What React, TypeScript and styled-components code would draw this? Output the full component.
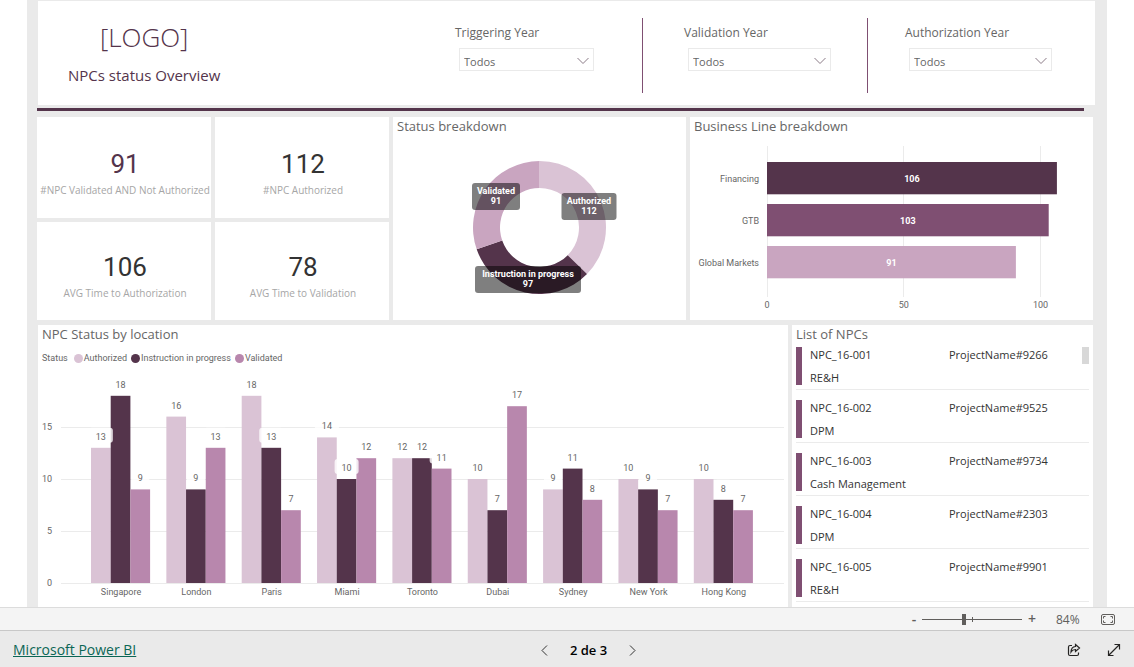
import React, { useState } from "react";
import styled, { createGlobalStyle } from "styled-components";

const color = {
  light: "#dac3d5",
  mid: "#b887ad",
  soft: "#c9a5c0",
  plum: "#7f4f72",
  dark: "#54344b",
  canvas: "#eaeaea",
  grid: "#ebebeb",
  text: "#666666",
};

const textFont = '"Open Sans", "Noto Sans", sans-serif';
const numberFont = 'Roboto, "Open Sans", sans-serif';

const GlobalStyle = createGlobalStyle`
  *, *::before, *::after { box-sizing: border-box; }
  body {
    margin: 0;
    background: #fff;
    color: ${color.text};
    font-family: ${textFont};
    font-size: 12px;
  }
  button, select { font-family: inherit; }
`;

const Page = styled.div`
  display: flex;
  flex-direction: column;
  min-height: 100vh;
`;

const Canvas = styled.main`
  display: flex;
  flex-direction: column;
  flex: 1;
  margin: 0 27px;
  padding: 1px 12px 0 10px;
  background: ${color.canvas};
`;

const Header = styled.header`
  display: flex;
  justify-content: space-between;
  align-items: flex-start;
  height: 104px;
  padding: 17px 2px 0 30px;
  margin: 0 0 0 1px;
  background: #fff;
`;

const Brand = styled.div`
  display: flex;
  flex-direction: column;
  align-items: center;
  padding-top: 1px;
  color: ${color.dark};
`;

const Logo = styled.div`
  font-size: 26px;
  font-weight: 300;
  line-height: 36px;
`;

const ReportTitle = styled.h1`
  margin: 0;
  font-size: 15px;
  font-weight: 400;
  line-height: 40px;
`;

const Filters = styled.div`
  display: grid;
  grid-template-columns: 230px 225px 226px;
`;

const FilterCell = styled.div<{ $inset: number }>`
  display: flex;
  flex-direction: column;
  gap: 5px;
  height: 75px;
  padding: 5px 0 0 ${(p) => p.$inset}px;
  border-left: 1px solid ${color.plum};

  &:first-child {
    border-left-color: transparent;
  }
`;

const FilterLabel = styled.label`
  font-size: 12px;
  line-height: 20px;
`;

const SelectBox = styled.div<{ $width: number }>`
  position: relative;
  width: ${(p) => p.$width}px;
  margin-left: 4px;

  svg {
    position: absolute;
    top: 9px;
    right: 5px;
    pointer-events: none;
  }
`;

const Select = styled.select`
  appearance: none;
  display: block;
  width: 100%;
  height: 23px;
  padding: 3px 4px 0;
  border: 1px solid #eaeaea;
  border-radius: 0;
  background: #fff;
  color: ${color.text};
  font-size: 11px;
`;

const Rule = styled.hr`
  height: 3px;
  margin: 3px 11px 6px 0;
  border: 0;
  background: ${color.dark};
`;

const Overview = styled.section`
  display: grid;
  grid-template-columns: 174fr 174fr 293fr 403fr;
  grid-template-rows: 101px 98px;
  gap: 4px;
  margin: 0 2px 5px 0;
`;

const Details = styled.section`
  display: grid;
  grid-template-columns: 750fr 301fr;
  gap: 4px;
  flex: 1;
  margin: 0 2px 0 1px;
`;

const Card = styled.article<{ $tall?: boolean }>`
  display: flex;
  flex-direction: column;
  min-width: 0;
  grid-row: ${(p) => (p.$tall ? "span 2" : "auto")};
  background: #fff;
`;

const CardTitle = styled.h2`
  margin: 0;
  padding: 0 4px 2px;
  font-size: 13px;
  font-weight: 400;
  line-height: 18px;
`;

const Kpi = styled(Card)`
  align-items: center;
  justify-content: center;
  padding: 12px 0 0 2px;
`;

const KpiValue = styled.div<{ $accent?: boolean }>`
  color: ${(p) => (p.$accent ? color.dark : "#333")};
  font-family: ${numberFont};
  font-size: 26px;
  line-height: 32px;
`;

const KpiLabel = styled.div`
  color: #a6a6a6;
  font-size: 10px;
  line-height: 20px;
  white-space: nowrap;
`;

const Chart = styled.svg<{ $height: number }>`
  display: block;
  width: 100%;
  height: ${(p) => p.$height}px;
  font-family: ${numberFont};
  font-size: 9px;
  fill: ${color.text};
`;

const DataLabel = styled.text`
  font-weight: 700;
  fill: #fff;
`;

const Legend = styled.div`
  display: flex;
  align-items: center;
  gap: 4px;
  height: 28px;
  padding: 0 4px 2px;
  font-family: ${numberFont};
  font-size: 9px;
`;

const LegendTitle = styled.span`
  margin-right: 2px;
`;

const LegendItem = styled.span<{ $color: string }>`
  display: flex;
  align-items: center;
  gap: 1px;

  &::before {
    content: "";
    width: 9px;
    height: 9px;
    border-radius: 50%;
    background: ${(p) => p.$color};
  }
`;

const ListBody = styled.div`
  position: relative;
  padding: 2px 4px 0 4px;
`;

const ProjectList = styled.ul`
  margin: 0;
  padding: 0;
  list-style: none;
`;

const ProjectRow = styled.li`
  display: grid;
  grid-template-columns: 139fr 154fr;
  height: 43px;
  margin-bottom: 10px;
  border-bottom: 1px solid ${color.grid};
  color: #333;
  font-size: 11px;
  line-height: 16px;

  &:last-child {
    margin-bottom: 0;
  }
`;

const ProjectName = styled.span`
  padding-left: 14px;
`;

const ProjectMain = styled.div`
  display: flex;
  flex-direction: column;
  gap: 7px;
  height: 38px;
  padding-left: 8px;
  border-left: 6px solid ${color.plum};
  white-space: nowrap;
`;

const ScrollThumb = styled.div`
  position: absolute;
  top: 2px;
  right: 4px;
  width: 7px;
  height: 17px;
  background: #d8d8d8;
`;

const ZoomBar = styled.div`
  display: flex;
  align-items: center;
  justify-content: flex-end;
  height: 23px;
  padding: 0 18px 0 0;
  border-top: 1px solid #dcdcdc;
  background: #f4f4f4;
`;

const ZoomButton = styled.button`
  width: 12px;
  padding: 0;
  border: 0;
  background: none;
  color: #605e5c;
  font-size: 14px;
  font-weight: 600;
  line-height: 20px;
  text-align: center;
`;

const ZoomSlider = styled.input`
  appearance: none;
  width: 100px;
  height: 12px;
  margin: 0 4px 0 2px;
  background:
    linear-gradient(#605e5c, #605e5c) 50px 50% / 1px 5px no-repeat,
    linear-gradient(#605e5c, #605e5c) 0 50% / 100% 1px no-repeat;

  &::-webkit-slider-thumb {
    appearance: none;
    width: 4px;
    height: 11px;
    border: 0;
    border-radius: 0;
    background: #605e5c;
  }
`;

const ZoomValue = styled.output`
  width: 26px;
  margin: 0 18px;
  color: #605e5c;
  font-size: 12px;
`;

const IconButton = styled.button`
  display: flex;
  align-items: center;
  justify-content: center;
  width: 16px;
  height: 16px;
  padding: 0;
  border: 0;
  background: none;
  color: #252423;
`;

const NavBar = styled.footer`
  display: grid;
  grid-template-columns: 1fr auto 1fr;
  align-items: center;
  height: 37px;
  padding: 2px 12px 0 13px;
  border-top: 1px solid #c8c8c8;
  background: ${color.canvas};
`;

const BrandLink = styled.a`
  justify-self: start;
  color: #0a6655;
  font-size: 14px;
  line-height: 20px;
`;

const Pager = styled.nav`
  display: flex;
  align-items: center;
  gap: 17px;
  margin-left: 42px;
  color: #000;
  font-size: 13px;
  font-weight: 600;
`;

const Actions = styled.div`
  display: flex;
  justify-self: end;
  gap: 24px;
`;

const filters = [
  { id: "triggering", label: "Triggering Year", width: 135, inset: 42 },
  { id: "validation", label: "Validation Year", width: 143, inset: 41 },
  { id: "authorization", label: "Authorization Year", width: 143, inset: 37 },
];

const kpis = [
  { value: 91, label: "#NPC Validated AND Not Authorized", accent: true },
  { value: 112, label: "#NPC Authorized" },
];

const averages = [
  { value: 106, label: "AVG Time to Authorization" },
  { value: 78, label: "AVG Time to Validation" },
];

const businessLines = [
  { name: "Financing", value: 106, fill: color.dark },
  { name: "GTB", value: 103, fill: color.plum },
  { name: "Global Markets", value: 91, fill: color.soft },
];

const statuses = [
  { name: "Authorized", fill: color.light },
  { name: "Instruction in progress", fill: color.dark },
  { name: "Validated", fill: color.mid },
];

const locations: { name: string; values: number[] }[] = [
  { name: "Singapore", values: [13, 18, 9] },
  { name: "London", values: [16, 9, 13] },
  { name: "Paris", values: [18, 13, 7] },
  { name: "Miami", values: [14, 10, 12] },
  { name: "Toronto", values: [12, 12, 11] },
  { name: "Dubai", values: [10, 7, 17] },
  { name: "Sydney", values: [9, 11, 8] },
  { name: "New York", values: [10, 9, 7] },
  { name: "Hong Kong", values: [10, 8, 7] },
];

const projects = [
  { id: "NPC_16-001", project: "ProjectName#9266", line: "RE&H" },
  { id: "NPC_16-002", project: "ProjectName#9525", line: "DPM" },
  { id: "NPC_16-003", project: "ProjectName#9734", line: "Cash Management" },
  { id: "NPC_16-004", project: "ProjectName#2303", line: "DPM" },
  { id: "NPC_16-005", project: "ProjectName#9901", line: "RE&H" },
];

function ringSlice(from: number, to: number, cx: number, cy: number, outer: number, inner: number) {
  const point = (share: number, radius: number) => {
    const angle = share * 2 * Math.PI;
    return `${cx + radius * Math.sin(angle)} ${cy - radius * Math.cos(angle)}`;
  };
  const large = to - from > 0.5 ? 1 : 0;
  return (
    `M${point(from, outer)}A${outer} ${outer} 0 ${large} 1 ${point(to, outer)}` +
    `L${point(to, inner)}A${inner} ${inner} 0 ${large} 0 ${point(from, inner)}Z`
  );
}

const slices = [
  { name: "Authorized", value: 112, fill: color.light, x: 196, y: 69, width: 55 },
  { name: "Instruction in progress", value: 97, fill: color.dark, x: 135, y: 142, width: 106 },
  { name: "Validated", value: 91, fill: color.soft, x: 103, y: 59, width: 48 },
];

function StatusDonut() {
  const total = slices.reduce((sum, s) => sum + s.value, 0);
  let start = 0;
  return (
    <Chart viewBox="0 0 293 183" $height={183} role="img" aria-label="Status breakdown">
      {slices.map((s) => {
        const from = start;
        start += s.value / total;
        return <path key={s.name} d={ringSlice(from, start, 146.5, 90.5, 66.5, 39.5)} fill={s.fill} />;
      })}
      {slices.map((s) => (
        <g key={s.name} textAnchor="middle">
          <rect x={s.x - s.width / 2} y={s.y - 13} width={s.width} height="27" rx="3" fill="#000" fillOpacity="0.5" />
          <DataLabel x={s.x} y={s.y - 2}>{s.name}</DataLabel>
          <DataLabel x={s.x} y={s.y + 8}>{s.value}</DataLabel>
        </g>
      ))}
    </Chart>
  );
}

function BusinessBars() {
  const zero = 77;
  const unit = 2.735;
  return (
    <Chart viewBox="0 0 403 183" $height={183} role="img" aria-label="Business Line breakdown">
      {[0, 50, 100].map((tick) => (
        <g key={tick}>
          <rect x={Math.floor(zero + tick * unit)} y="9" width="1" height="151" fill={color.grid} />
          <text x={zero + tick * unit} y="171" textAnchor="middle">{tick}</text>
        </g>
      ))}
      {businessLines.map((b, i) => (
        <g key={b.name}>
          <rect x={zero} y={25 + i * 42} width={b.value * unit} height="32.3" fill={b.fill} />
          <text x="69" y={45 + i * 42} textAnchor="end">{b.name}</text>
          <DataLabel x={zero + (b.value * unit) / 2} y={45 + i * 42} textAnchor="middle">{b.value}</DataLabel>
        </g>
      ))}
    </Chart>
  );
}

function LocationColumns() {
  const base = 210;
  const unit = 10.4;
  const step = 75.35;
  const bar = 19.7;
  const columns = locations.flatMap((l, i) =>
    l.values.map((value, j) => ({
      key: `${l.name}-${j}`,
      value,
      fill: statuses[j].fill,
      x: 53 + i * step + j * bar,
      top: base - value * unit,
    }))
  );
  return (
    <Chart viewBox="0 0 750 234" $height={234} role="img" aria-label="NPC Status by location">
      {[0, 5, 10, 15].map((tick) => (
        <g key={tick}>
          <rect x="23" y={Math.round(base - tick * unit)} width="723" height="1" fill={color.grid} />
          <text x="14" y={base - tick * unit + 3} textAnchor="end">{tick}</text>
        </g>
      ))}
      {columns.map((c) => (
        <rect key={c.key} x={c.x} y={c.top} width={bar} height={base - c.top} fill={c.fill} />
      ))}
      {columns.map((c) => {
        const half = c.value > 9 ? 12 : 9;
        const center = c.x + bar / 2;
        return (
          <g key={c.key}>
            <rect x={center - half} y={c.top - 20} width={half * 2} height="15" rx="3" fill="#fff" fillOpacity="0.8" />
            <text x={center} y={c.top - 8} textAnchor="middle">{c.value}</text>
          </g>
        );
      })}
      {locations.map((l, i) => (
        <text key={l.name} x={53.5 + i * step + bar * 1.5} y="222" textAnchor="middle">{l.name}</text>
      ))}
    </Chart>
  );
}

function Chevron({ direction }: { direction: "down" | "left" | "right" }) {
  const paths = {
    down: "M0.5 1L6 6.500L11.5 1",
    left: "M6 0.500L1 5.500L6 10.500",
    right: "M1 0.500L6 5.500L1 10.500",
  };
  const down = direction === "down";
  return (
    <svg width={down ? 12 : 7} height={down ? 8 : 11} fill="none" stroke={down ? "#8a7a86" : "#333"} aria-hidden="true">
      <path d={paths[direction]} />
    </svg>
  );
}

export default function App() {
  const [zoom, setZoom] = useState(84);
  return (
    <>
      <GlobalStyle />
      <Page>
        <Canvas>
          <Header>
            <Brand>
              <Logo>[LOGO]</Logo>
              <ReportTitle>NPCs status Overview</ReportTitle>
            </Brand>
            <Filters>
              {filters.map((f) => (
                <FilterCell key={f.id} $inset={f.inset}>
                  <FilterLabel htmlFor={f.id}>{f.label}</FilterLabel>
                  <SelectBox $width={f.width}>
                    <Select id={f.id}>
                      <option>Todos</option>
                    </Select>
                    <Chevron direction="down" />
                  </SelectBox>
                </FilterCell>
              ))}
            </Filters>
          </Header>
          <Rule />
          <Overview>
            {kpis.map((k) => (
              <Kpi key={k.label}>
                <KpiValue $accent={k.accent}>{k.value}</KpiValue>
                <KpiLabel>{k.label}</KpiLabel>
              </Kpi>
            ))}
            <Card $tall>
              <CardTitle>Status breakdown</CardTitle>
              <StatusDonut />
            </Card>
            <Card $tall>
              <CardTitle>Business Line breakdown</CardTitle>
              <BusinessBars />
            </Card>
            {averages.map((k) => (
              <Kpi key={k.label}>
                <KpiValue>{k.value}</KpiValue>
                <KpiLabel>{k.label}</KpiLabel>
              </Kpi>
            ))}
          </Overview>
          <Details>
            <Card>
              <CardTitle>NPC Status by location</CardTitle>
              <Legend>
                <LegendTitle>Status</LegendTitle>
                {statuses.map((s) => (
                  <LegendItem key={s.name} $color={s.fill}>{s.name}</LegendItem>
                ))}
              </Legend>
              <LocationColumns />
            </Card>
            <Card>
              <CardTitle>List of NPCs</CardTitle>
              <ListBody>
                <ProjectList>
                  {projects.map((p) => (
                    <ProjectRow key={p.id}>
                      <ProjectMain>
                        <span>{p.id}</span>
                        <span>{p.line}</span>
                      </ProjectMain>
                      <ProjectName>{p.project}</ProjectName>
                    </ProjectRow>
                  ))}
                </ProjectList>
                <ScrollThumb />
              </ListBody>
            </Card>
          </Details>
        </Canvas>
        <ZoomBar>
          <ZoomButton type="button" aria-label="Zoom out">-</ZoomButton>
          <ZoomSlider
            type="range"
            aria-label="Zoom"
            min={0}
            max={200}
            value={zoom}
            onChange={(e) => setZoom(Number(e.target.value))}
          />
          <ZoomButton type="button" aria-label="Zoom in">+</ZoomButton>
          <ZoomValue>{zoom}%</ZoomValue>
          <IconButton type="button" aria-label="Fit to page">
            <svg width="14" height="11" fill="none" stroke="#605e5c" aria-hidden="true">
              <rect x="0.5" y="0.5" width="13" height="10" rx="1.5" />
              <path d="M4.5 2.5H2.5V4.5M9.5 2.5H11.5V4.5M4.5 8.5H2.5V6.5M9.5 8.5H11.5V6.5" />
            </svg>
          </IconButton>
        </ZoomBar>
        <NavBar>
          <BrandLink href="#power-bi">Microsoft Power BI</BrandLink>
          <Pager aria-label="Pages">
            <IconButton type="button" aria-label="Previous page">
              <Chevron direction="left" />
            </IconButton>
            <span>2 de 3</span>
            <IconButton type="button" aria-label="Next page">
              <Chevron direction="right" />
            </IconButton>
          </Pager>
          <Actions>
            <IconButton type="button" aria-label="Share">
              <svg width="14" height="14" fill="none" stroke="currentColor" strokeWidth="1.2" aria-hidden="true">
                <path d="M5 2.5H3Q1.500 2.500 1.500 4V11Q1.500 12.500 3 12.500H10Q11.500 12.500 11.500 11V9.500" />
                <path d="M8.500 1.500L12.500 5L8.500 8.500V6.500Q5.500 6.500 4 9Q4 4 8.500 3.500Z" />
              </svg>
            </IconButton>
            <IconButton type="button" aria-label="Full screen">
              <svg width="14" height="14" fill="none" stroke="currentColor" strokeWidth="1.2" aria-hidden="true">
                <path d="M1.500 12.500L12.500 1.500M7.500 1.500H12.500V6.500M1.500 7.500V12.500H6.500" />
              </svg>
            </IconButton>
          </Actions>
        </NavBar>
      </Page>
    </>
  );
}
